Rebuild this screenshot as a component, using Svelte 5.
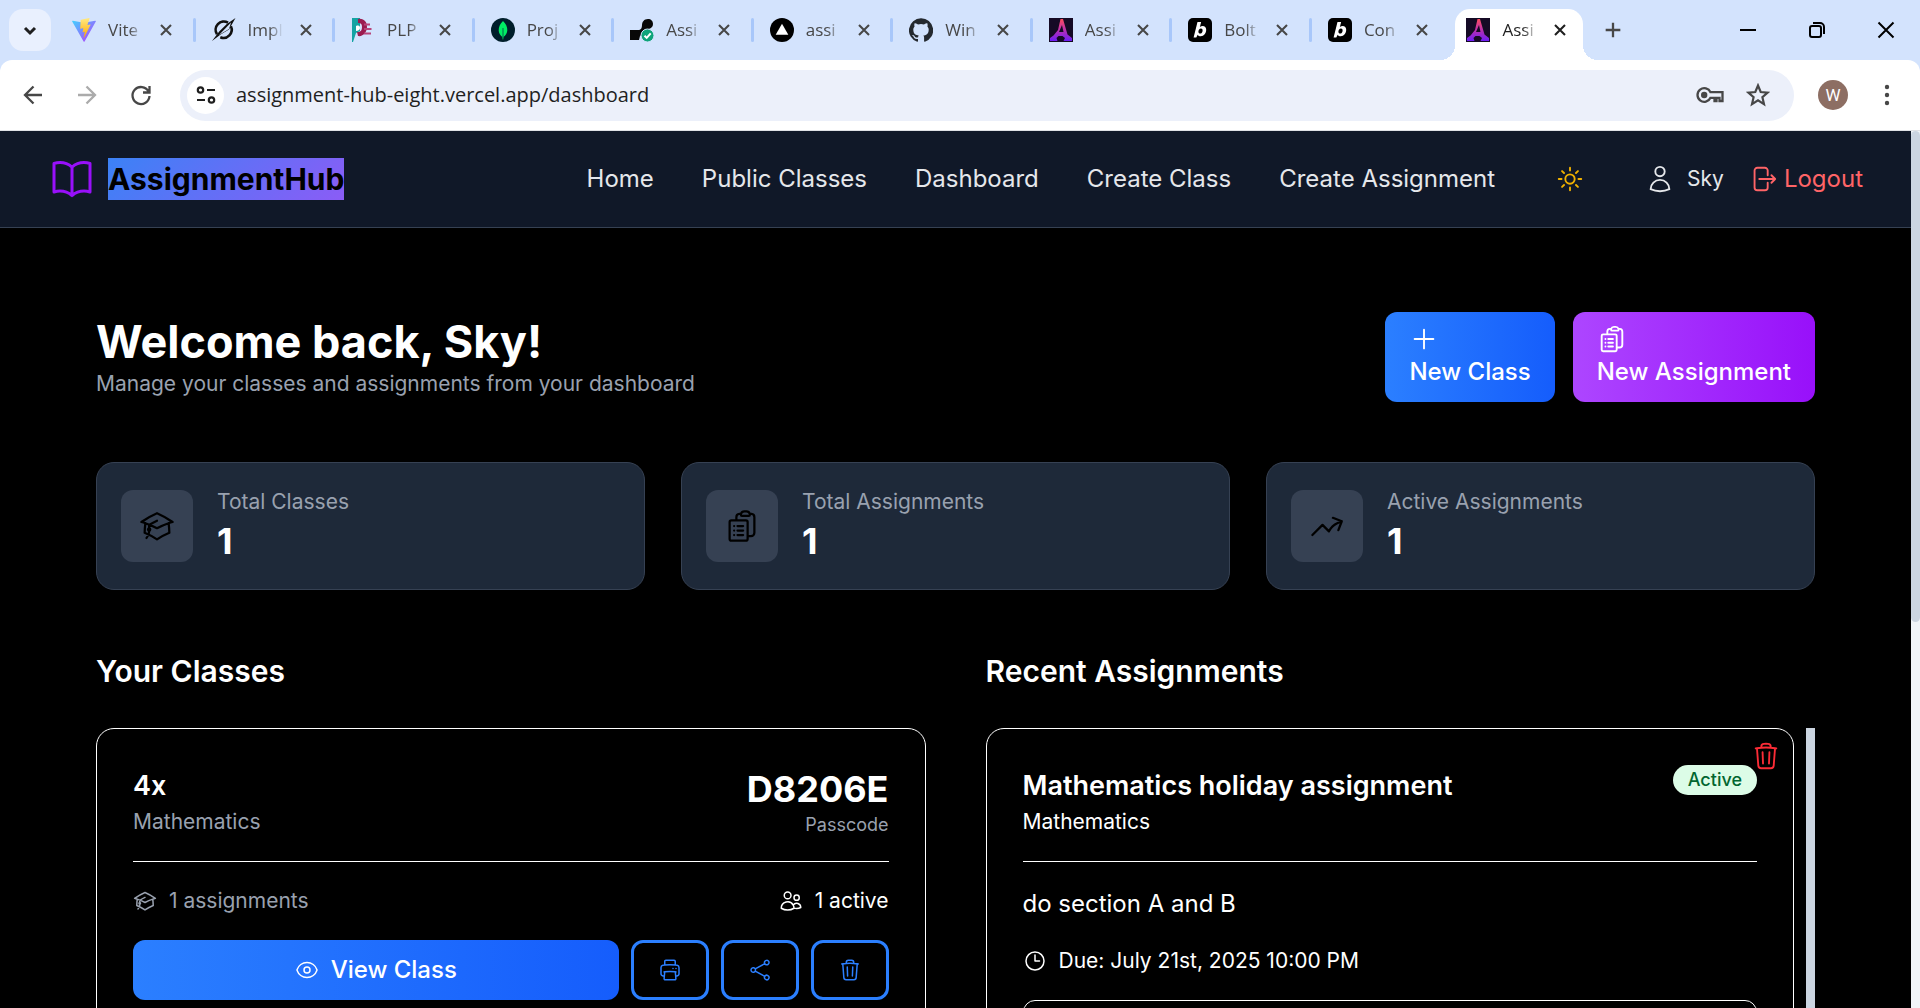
<script>
  const tabs = [
    { icon: 'vite', title: 'Vite' },
    { icon: 'slash', title: 'Impl' },
    { icon: 'plp', title: 'PLP' },
    { icon: 'leaf', title: 'Proj' },
    { icon: 'check', title: 'Assi' },
    { icon: 'triangle', title: 'assi' },
    { icon: 'github', title: 'Win' },
    { icon: 'hub', title: 'Assi' },
    { icon: 'bolt', title: 'Bolt' },
    { icon: 'bolt', title: 'Con' },
    { icon: 'hub', title: 'Assi', active: true }
  ];

  const links = ['Home', 'Public Classes', 'Dashboard', 'Create Class', 'Create Assignment'];

  const icons = {
    book: 'M12 6.042A8.967 8.967 0 0 0 6 3.75c-1.052 0-2.062.18-3 .512v14.25A8.987 8.987 0 0 1 6 18c2.305 0 4.408.867 6 2.292m0-14.25a8.966 8.966 0 0 1 6-2.292c1.052 0 2.062.18 3 .512v14.25A8.987 8.987 0 0 0 18 18a8.967 8.967 0 0 0-6 2.292m0-14.25v14.25',
    sun: 'M12 3v2.25m6.364.386-1.591 1.591M21 12h-2.25m-.386 6.364-1.591-1.591M12 18.75V21m-4.773-4.227-1.591 1.591M5.25 12H3m4.227-4.773L5.636 5.636M15.75 12a3.75 3.75 0 1 1-7.5 0 3.75 3.75 0 0 1 7.5 0Z',
    user: 'M15.75 6a3.75 3.75 0 1 1-7.5 0 3.75 3.75 0 0 1 7.5 0ZM4.501 20.118a7.5 7.5 0 0 1 14.998 0A17.933 17.933 0 0 1 12 21.75c-2.676 0-5.216-.584-7.499-1.632Z',
    logout: 'M15.75 9V5.25A2.25 2.25 0 0 0 13.5 3h-6a2.25 2.25 0 0 0-2.25 2.25v13.5A2.25 2.25 0 0 0 7.5 21h6a2.25 2.25 0 0 0 2.25-2.25V15m3 0 3-3m0 0-3-3m3 3H9',
    plus: 'M12 4.5v15m7.5-7.5h-15',
    clipboard: 'M9 12h3.75M9 15h3.75M9 18h3.75m3 .75H18a2.25 2.25 0 0 0 2.25-2.25V6.108c0-1.135-.845-2.098-1.976-2.192a48.424 48.424 0 0 0-1.123-.08m-5.801 0c-.065.21-.1.433-.1.664 0 .414.336.75.75.75h4.5a.75.75 0 0 0 .75-.75 2.25 2.25 0 0 0-.1-.664m-5.8 0A2.251 2.251 0 0 1 13.5 2.25H15c1.012 0 1.867.668 2.15 1.586m-5.8 0c-.376.023-.75.05-1.124.08C9.095 4.01 8.25 4.973 8.25 6.108V8.25m0 0H4.875c-.621 0-1.125.504-1.125 1.125v11.25c0 .621.504 1.125 1.125 1.125h9.75c.621 0 1.125-.504 1.125-1.125V9.375c0-.621-.504-1.125-1.125-1.125H8.25ZM6.75 12h.008v.008H6.75V12Zm0 3h.008v.008H6.75V15Zm0 3h.008v.008H6.75V18Z',
    cap: 'M4.26 10.147a60.438 60.438 0 0 0-.491 6.347A48.62 48.62 0 0 1 12 20.904a48.62 48.62 0 0 1 8.232-4.41 60.46 60.46 0 0 0-.491-6.347m-15.482 0a50.636 50.636 0 0 0-2.658-.813A59.906 59.906 0 0 1 12 3.493a59.903 59.903 0 0 1 10.399 5.84c-.896.248-1.783.52-2.658.814m-15.482 0A50.717 50.717 0 0 1 12 13.489a50.702 50.702 0 0 1 7.74-3.342M6.75 15a.75.75 0 1 0 0-1.5.75.75 0 0 0 0 1.5Zm0 0v-3.675A55.378 55.378 0 0 1 12 8.443m-7.007 11.55A5.981 5.981 0 0 0 6.75 15.75v-1.5',
    trend: 'M2.25 18 9 11.25l4.306 4.306a11.95 11.95 0 0 1 5.814-5.518l2.74-1.22m0 0-5.94-2.281m5.94 2.28-2.28 5.941',
    printer: 'M6.72 13.829c-.24.03-.48.062-.72.096m.72-.096a42.415 42.415 0 0 1 10.56 0m-10.56 0L6.34 18m10.94-4.171c.24.03.48.062.72.096m-.72-.096L17.66 18m0 0 .229 2.523a1.125 1.125 0 0 1-1.12 1.227H7.231c-.662 0-1.18-.568-1.12-1.227L6.34 18m11.318 0h1.091A2.25 2.25 0 0 0 21 15.75V9.456c0-1.081-.768-2.015-1.837-2.175a48.055 48.055 0 0 0-1.913-.247M6.34 18H5.25A2.25 2.25 0 0 1 3 15.75V9.456c0-1.081.768-2.015 1.837-2.175a48.041 48.041 0 0 1 1.913-.247m10.5 0a48.536 48.536 0 0 0-10.5 0m10.5 0V3.375c0-.621-.504-1.125-1.125-1.125h-8.25c-.621 0-1.125.504-1.125 1.125v3.659M18 10.5h.008v.008H18V10.5Zm-3 0h.008v.008H15V10.5Z',
    share: 'M7.217 10.907a2.25 2.25 0 1 0 0 2.186m0-2.186c.18.324.283.696.283 1.093s-.103.77-.283 1.093m0-2.186 9.566-5.314m-9.566 7.5 9.566 5.314m0 0a2.25 2.25 0 1 0 3.935 2.186 2.25 2.25 0 0 0-3.935-2.186Zm0-12.814a2.25 2.25 0 1 0 3.933-2.185 2.25 2.25 0 0 0-3.933 2.185Z',
    trash: 'm14.74 9-.346 9m-4.788 0L9.26 9m9.968-3.21c.342.052.682.107 1.022.166m-1.022-.165L18.16 19.673a2.25 2.25 0 0 1-2.244 2.077H8.084a2.25 2.25 0 0 1-2.244-2.077L4.772 5.79m14.456 0a48.108 48.108 0 0 0-3.478-.397m-12 .562c.34-.059.68-.114 1.022-.165m0 0a48.11 48.11 0 0 1 3.478-.397m7.5 0v-.916c0-1.18-.91-2.164-2.09-2.201a51.964 51.964 0 0 0-3.32 0c-1.18.037-2.09 1.022-2.09 2.201v.916m7.5 0a48.667 48.667 0 0 0-7.5 0',
    eye: 'M2.036 12.322a1.012 1.012 0 0 1 0-.639C3.423 7.51 7.36 4.5 12 4.5c4.638 0 8.573 3.007 9.963 7.178.07.207.07.431 0 .639C20.577 16.49 16.64 19.5 12 19.5c-4.638 0-8.573-3.007-9.963-7.178ZM15 12a3 3 0 1 1-6 0 3 3 0 0 1 6 0Z',
    users: 'M15 19.128a9.38 9.38 0 0 0 2.625.372 9.337 9.337 0 0 0 4.121-.952 4.125 4.125 0 0 0-7.533-2.493M15 19.128v-.003c0-1.113-.285-2.16-.786-3.07M15 19.128v.106A12.318 12.318 0 0 1 8.624 21c-2.331 0-4.512-.645-6.374-1.766l-.001-.109a6.375 6.375 0 0 1 11.964-3.07M12 6.375a3.375 3.375 0 1 1-6.75 0 3.375 3.375 0 0 1 6.75 0Zm8.25 2.25a2.625 2.625 0 1 1-5.25 0 2.625 2.625 0 0 1 5.25 0Z',
    clock: 'M12 6v6h4.5m4.5 0a9 9 0 1 1-18 0 9 9 0 0 1 18 0Z'
  };

  const stats = [
    { icon: 'cap', label: 'Total Classes', value: 1 },
    { icon: 'clipboard', label: 'Total Assignments', value: 1 },
    { icon: 'trend', label: 'Active Assignments', value: 1 }
  ];
</script>

{#snippet icon(name, size = 'md')}
  <svg class="icon {size}" viewBox="0 0 24 24" aria-hidden="true"><path d={icons[name]} /></svg>
{/snippet}

{#snippet favicon(name)}
  <svg class="favicon" viewBox="0 0 24 24" aria-hidden="true">
    {#if name === 'vite'}
      <defs>
        <linearGradient id="va" x1="0" y1="0" x2="1" y2="1"><stop offset="0" stop-color="#41d1ff" /><stop offset="1" stop-color="#bd34fe" /></linearGradient>
        <linearGradient id="vb" x1="0" y1="0" x2="0" y2="1"><stop offset="0" stop-color="#ffea83" /><stop offset="1" stop-color="#ffa800" /></linearGradient>
      </defs>
      <path fill="url(#va)" d="M23.8 3.6 12.6 23.5c-.2.4-.8.4-1 0L.2 3.6c-.3-.5.1-1 .6-.9L12 4.7l11.200-2c.5-.1.900.4.6.9z" />
      <path fill="url(#vb)" d="M17.200.1 9 1.700c-.2 0-.3.100-.3.300L8.200 10.400c0 .2.200.400.400.300l2.300-.5c.200 0 .400.100.400.400l-.7 3.300c0 .2.200.400.400.300l1.400-.4c.2-.1.500.1.400.400l-1.100 5.200c-.1.300.400.500.500.200l6.300-12.700c.1-.2-.1-.4-.3-.4l-2.400.5c-.2 0-.4-.2-.3-.4L17.600.5c0-.2-.200-.5-.4-.4z" />
    {:else if name === 'slash'}
      <path fill="none" stroke="#111" stroke-width="2.600" d="M18.900 8.300A8.200 8.200 0 0 1 8.300 19.300M5 16.300A8.200 8.200 0 0 1 16 4.700" />
      <path fill="#111" d="M23.500 0 17 11.500 9 16.200 0 23l7.200-9.500L14.800 6z" />
      <path fill="#d3e3fd" d="m19 4.500-12 12.600L17 11z" />
    {:else if name === 'plp'}
      <path fill="#14a3a3" d="M1 0h8v13l-4 2-3 9H1z" />
      <path fill="#9b1c50" d="M7 1c6-1 9 3 9 8s-4 10-9 9l-1-4c4 0 5-2 5-5s-1-4-4-4z" />
      <path fill="#fff" d="M5 8c3-1 4 0 4 2s-2 3-4 3z" />
      <path stroke="#b8447a" stroke-width="2" d="M13 6.500h6M13 11h7.500M13 15.500h7" />
    {:else if name === 'leaf'}
      <circle cx="12" cy="12" r="12" fill="#001e2b" />
      <path fill="#00ed64" d="M12 3c3 3 4.500 6 4.300 9.500-.2 3-1.800 5-3.800 6.500l-.3 2.500h-.5l-.3-2.500c-2-1.500-3.600-3.500-3.700-6.500C7.600 9 9 6 12 3z" />
      <path stroke="#00684a" stroke-width="1" d="M12 10v9" />
    {:else if name === 'check'}
      <path fill="#080808" d="M0 12h8c3 0 4-2 4-5 0-3 2-6 6-6 3 0 5 2 5 5s-2 4-4 5l-9 7-1 4H0z" />
      <circle cx="17.500" cy="17.500" r="6.500" fill="#0ea47a" stroke="#d3e3fd" />
      <path fill="none" stroke="#fff" stroke-width="2" d="m14.500 17.700 2.200 2.200 4-4.600" />
    {:else if name === 'triangle'}
      <circle cx="12" cy="12" r="12" fill="#000" />
      <path fill="#fff" d="m12 5.800 6.300 11H5.700z" />
    {:else if name === 'github'}
      <path fill="#24292f" d="M12 .3a12 12 0 0 0-3.800 23.400c.6.1.8-.3.8-.6v-2.200c-3.300.7-4-1.400-4-1.400-.6-1.400-1.400-1.800-1.400-1.800-1-.7.1-.7.1-.7 1.200 0 1.900 1.200 1.900 1.200 1 1.800 2.800 1.300 3.500 1 0-.8.400-1.300.7-1.600-2.700-.3-5.500-1.300-5.500-6 0-1.200.5-2.300 1.300-3.100-.2-.4-.6-1.600 0-3.200 0 0 1-.3 3.400 1.200a11.500 11.500 0 0 1 6 0c2.300-1.500 3.300-1.200 3.300-1.200.6 1.600.2 2.800.1 3.200.8.8 1.300 1.900 1.300 3.200 0 4.600-2.800 5.600-5.500 5.900.5.400.9 1 .9 2.200v3.300c0 .3.1.7.8.6A12 12 0 0 0 12 .3" />
    {:else if name === 'hub'}
      <defs><linearGradient id="ha" x1="0" y1="0" x2="0" y2="1"><stop offset="0" stop-color="#ff4d5d" /><stop offset=".5" stop-color="#b92fb0" /><stop offset="1" stop-color="#6d1df5" /></linearGradient></defs>
      <path fill="#150a25" d="M0 0h24v24H0z" />
      <path fill="url(#ha)" fill-rule="evenodd" d="M11.500 1h2.500l4.500 15.500 4.500 3.500v3h-8.500l1.500-3-2.500-2H9.500L7.500 20l1 3H1v-3l3.500-2.500L9 12zM13 7l-3 7h4.500z" />
    {:else if name === 'bolt'}
      <rect width="24" height="24" rx="5" fill="#000" />
      <path fill="#fff" fill-rule="evenodd" d="M9.500 4h3.600l-1.200 5c.8-.8 1.700-1.100 2.700-1.100 2.200 0 3.600 1.500 3.600 3.900 0 3.500-2.300 6.500-5.400 6.500-1.400 0-2.500-.6-3.100-1.600l-1.400 2.800H5.600zM13 10.500c-1.500 0-2.600 1.500-2.600 3.200 0 1.100.7 1.900 1.700 1.900 1.400 0 2.500-1.500 2.500-3.200 0-1.200-.6-1.900-1.600-1.900z" />
    {/if}
  </svg>
{/snippet}

<div class="window">
  <div class="tabbar">
    <button class="tab-search" aria-label="Search tabs">
      <svg class="glyph s24" viewBox="0 0 24 24"><path d="m7 10 5 5 5-5" stroke-width="3" /></svg>
    </button>
    <div class="tabs">
      {#each tabs as tab}
        <div class="tab" class:active={tab.active}>
          {@render favicon(tab.icon)}
          <span class="tab-title">{tab.title}</span>
          <button class="close" aria-label="Close tab">
            <svg class="glyph s24" viewBox="0 0 24 24"><path d="m6 6 12 12M18 6 6 18" stroke-width="2.500" /></svg>
          </button>
        </div>
      {/each}
    </div>
    <button class="new-tab" aria-label="New tab">
      <svg class="glyph s24" viewBox="0 0 24 24"><path d="M12 4v16M4 12h16" stroke-width="2.500" /></svg>
    </button>
    <div class="window-controls">
      <button aria-label="Minimize"><svg class="glyph s24" viewBox="0 0 24 24"><path d="M4 12h16" stroke-width="2" /></svg></button>
      <button aria-label="Restore"><svg class="glyph s24" viewBox="0 0 24 24"><rect x="5" y="8" width="11" height="11" rx="2" stroke-width="2" /><path d="M8 5h7a4 4 0 0 1 4 4v7" stroke-width="2" /></svg></button>
      <button aria-label="Close window"><svg class="glyph s24" viewBox="0 0 24 24"><path d="m4.500 4.500 15 15m0-15-15 15" stroke-width="2" /></svg></button>
    </div>
  </div>

  <div class="toolbar-wrap">
    <div class="toolbar">
      <button class="tool" aria-label="Back"><svg class="glyph s24" viewBox="0 0 24 24"><path d="M21 12H4m8.500-8.500L4 12l8.500 8.500" stroke-width="2.300" /></svg></button>
      <button class="tool muted" aria-label="Forward"><svg class="glyph s24" viewBox="0 0 24 24"><path d="M3 12h17m-8.500-8.500L20 12l-8.500 8.500" stroke-width="2.300" /></svg></button>
      <button class="tool" aria-label="Reload"><svg class="glyph s24" viewBox="0 0 24 24"><path d="M19.500 8.500A8.500 8.500 0 1 0 20.500 13M20.500 3v6.500H14" stroke-width="2.300" /></svg></button>
      <div class="address">
        <button class="site-info" aria-label="Site information">
          <svg class="glyph s24" viewBox="0 0 24 24"><circle cx="6.500" cy="7" r="2.700" stroke-width="2.200" /><path d="M13 7h8M3 17h8" stroke-width="2.200" /><circle cx="17.500" cy="17" r="2.700" stroke-width="2.200" /></svg>
        </button>
        <input class="url" type="text" aria-label="Address" value="assignment-hub-eight.vercel.app/dashboard" />
        <button class="tool-sm" aria-label="Passwords">
          <svg class="key" viewBox="0 0 28 20"><path d="M14.500 7.200H26.500V16H23.500V12.800H20.500V16H18.500V12.800H14.500A6.800 6.800 0 1 1 14.500 7.200Z" /><circle cx="8.200" cy="10" r="3.200" /></svg>
        </button>
        <button class="tool-sm" aria-label="Bookmark">
          <svg class="glyph s24" viewBox="0 0 24 24"><path d="m12 2.500 2.700 6.500 7 .6-5.300 4.600 1.600 6.900-6-3.700-6 3.700 1.600-6.900L2.300 9.600l7-.6z" stroke-width="2.200" /></svg>
        </button>
      </div>
      <button class="avatar" aria-label="Profile">W</button>
      <button class="tool menu" aria-label="Menu"><svg class="dots" viewBox="0 0 24 24"><circle cx="12" cy="4" r="2.200" /><circle cx="12" cy="12" r="2.200" /><circle cx="12" cy="20" r="2.200" /></svg></button>
    </div>
  </div>

  <div class="viewport">
    <div class="page">
      <header class="site-header">
        <a class="brand" href="#home">
          {@render icon('book', 'xl')}
          <span class="brand-name">AssignmentHub</span>
        </a>
        <nav>
          {#each links as link}
            <a href="#{link}">{link}</a>
          {/each}
          <button class="theme" aria-label="Toggle theme">{@render icon('sun')}</button>
          <div class="account">
            <a class="profile" href="#profile">{@render icon('user')}Sky</a>
            <button class="logout">{@render icon('logout')}Logout</button>
          </div>
        </nav>
      </header>

      <main>
        <section class="welcome">
          <div>
            <h1>Welcome back, Sky!</h1>
            <p>Manage your classes and assignments from your dashboard</p>
          </div>
          <div class="actions">
            <button class="action blue">{@render icon('plus')}New Class</button>
            <button class="action purple">{@render icon('clipboard')}New Assignment</button>
          </div>
        </section>

        <section class="stats">
          {#each stats as stat}
            <div class="stat">
              <div class="stat-icon">{@render icon(stat.icon, 'lg')}</div>
              <div>
                <p class="stat-label">{stat.label}</p>
                <p class="stat-value">{stat.value}</p>
              </div>
            </div>
          {/each}
        </section>

        <div class="columns">
          <section>
            <h2>Your Classes</h2>
            <article class="card">
              <div class="card-head">
                <div>
                  <h3>4x</h3>
                  <p class="subject dim">Mathematics</p>
                </div>
                <div class="passcode">
                  <p class="code">D8206E</p>
                  <p class="code-label">Passcode</p>
                </div>
              </div>
              <div class="meta">
                <span class="meta-item dim">{@render icon('cap', 'sm')}1 assignments</span>
                <span class="meta-item">{@render icon('users', 'sm')}1 active</span>
              </div>
              <div class="card-actions">
                <button class="view">{@render icon('eye', 'sm')}View Class</button>
                <button class="outline" aria-label="Print">{@render icon('printer', 'sm')}</button>
                <button class="outline" aria-label="Share">{@render icon('share', 'sm')}</button>
                <button class="outline" aria-label="Delete class">{@render icon('trash', 'sm')}</button>
              </div>
            </article>
          </section>

          <section>
            <h2>Recent Assignments</h2>
            <div class="scroller">
              <article class="card">
                <button class="remove" aria-label="Delete assignment">{@render icon('trash')}</button>
                <div class="card-head">
                  <div>
                    <h3>Mathematics holiday assignment</h3>
                    <p class="subject">Mathematics</p>
                  </div>
                  <span class="badge">Active</span>
                </div>
                <p class="description">do section A and B</p>
                <p class="due">{@render icon('clock', 'sm')}Due: July 21st, 2025 10:00 PM</p>
                <div class="panel"></div>
              </article>
              <div class="list-scrollbar"></div>
            </div>
          </section>
        </div>
      </main>
    </div>
    <div class="page-scrollbar"><div class="thumb"></div></div>
  </div>
</div>

<style>
  :global(body) { margin: 0; }
  .window, .window * { box-sizing: border-box; }
  .window {
    height: 100vh;
    display: flex;
    flex-direction: column;
    overflow: hidden;
    font-family: Inter, sans-serif;
    background: #000;
  }
  button { font: inherit; color: inherit; background: none; border: 0; padding: 0; margin: 0; }
  a { color: inherit; text-decoration: none; }
  h1, h2, h3, p { margin: 0; }

  .glyph { display: block; fill: none; stroke: currentColor; }
  .s24 { width: 24px; height: 24px; }
  .icon {
    display: block;
    flex: none;
    fill: none;
    stroke: currentColor;
    stroke-width: 1.5;
    stroke-linecap: round;
    stroke-linejoin: round;
  }
  .sm { width: 24px; height: 24px; }
  .md { width: 30px; height: 30px; }
  .lg { width: 36px; height: 36px; }
  .xl { width: 48px; height: 48px; }

  /* Browser chrome */
  .tabbar {
    flex: none;
    display: flex;
    align-items: center;
    height: 60px;
    padding-left: 9px;
    background: #d3e3fd;
    color: #1f1f1f;
    font-family: "Open Sans", sans-serif;
  }
  .tab-search {
    flex: none;
    display: grid;
    place-items: center;
    width: 42px;
    height: 42px;
    border-radius: 14px;
    background: #e9f0fe;
  }
  .tabs {
    display: grid;
    grid-template-columns: repeat(11, minmax(0, 1fr));
    flex: 0 1 1540px;
    min-width: 0;
    height: 60px;
    padding: 9px 0 0 5px;
  }
  .tab {
    position: relative;
    display: flex;
    align-items: center;
    padding: 0 0 9px 16px;
    color: #474747;
  }
  .tab:not(.active)::after {
    content: "";
    position: absolute;
    right: 0;
    top: 9px;
    width: 3px;
    height: 24px;
    border-radius: 2px;
    background: #a8c7fa;
  }
  .tab:nth-last-child(2)::after { display: none; }
  .tab.active {
    margin: 0 8px 0 4px;
    padding-left: 11px;
    border-radius: 15px 15px 0 0;
    background: #fff;
    color: #1f1f1f;
  }
  .tab.active::before, .tab.active::after {
    content: "";
    position: absolute;
    bottom: 0;
    width: 15px;
    height: 15px;
  }
  .tab.active::before { left: -15px; background: radial-gradient(circle at 0 0, transparent 15px, #fff 15px); }
  .tab.active::after { right: -15px; background: radial-gradient(circle at 100% 0, transparent 15px, #fff 15px); }
  .favicon { flex: none; width: 24px; height: 24px; }
  .tab-title {
    flex: none;
    width: 35px;
    margin-left: 12px;
    white-space: nowrap;
    font-size: 17px;
    line-height: 24px;
    mask-image: linear-gradient(to right, #000 60%, transparent);
  }
  .close { margin-left: 11px; }
  .close .glyph { width: 20px; height: 20px; margin: 2px; }
  .new-tab { margin-left: 11px; color: #474747; }
  .new-tab .glyph { width: 22px; height: 22px; }
  .window-controls { display: flex; margin-left: auto; color: #000; }
  .window-controls button { display: grid; place-items: center; width: 69px; height: 60px; }

  .toolbar-wrap { flex: none; background: #d3e3fd; }
  .toolbar {
    display: flex;
    align-items: center;
    height: 71px;
    padding: 0 6px;
    border-bottom: 1px solid #dfe1e5;
    border-radius: 12px 12px 0 0;
    background: #fff;
    color: #474747;
  }
  .tool { flex: none; display: grid; place-items: center; width: 54px; height: 48px; }
  .muted { color: #ababab; }
  .address {
    flex: 1;
    display: flex;
    align-items: center;
    gap: 12px;
    height: 51px;
    margin: 0 24px 0 12px;
    padding: 0 18px 0 7px;
    border-radius: 26px;
    background: #ecf0fa;
  }
  .site-info {
    flex: none;
    display: grid;
    place-items: center;
    width: 37px;
    height: 37px;
    border-radius: 50%;
    background: #fff;
    color: #1f1f1f;
  }
  .url {
    flex: 1;
    min-width: 0;
    height: 36px;
    padding: 0 0 2px;
    border: 0;
    outline: 0;
    font-family: "Open Sans", sans-serif;
    font-size: 20px;
    color: #1f1f1f;
    background: none;
  }
  .tool-sm { flex: none; display: grid; place-items: center; width: 36px; height: 36px; }
  .key { width: 28px; height: 20px; fill: none; stroke: currentColor; stroke-width: 2.3; }
  .key circle { fill: currentColor; stroke: none; }
  .avatar {
    flex: none;
    width: 30px;
    height: 30px;
    border-radius: 50%;
    background: #8d6e63;
    color: #fff;
    font-family: Roboto, sans-serif;
    font-size: 17px;
    line-height: 30px;
    text-align: center;
  }
  .menu { margin-left: 12px; }
  .dots { width: 24px; height: 24px; fill: currentColor; }

  /* Page */
  .viewport { flex: 1; min-height: 0; display: flex; overflow: hidden; }
  .page { flex: 1; min-width: 0; background: #000; color: #fff; }
  .page-scrollbar { flex: none; width: 9px; background: #f1f5f9; }
  .thumb { height: 56%; border-radius: 5px; background: #cbd5e1; }

  .site-header {
    display: flex;
    align-items: center;
    justify-content: space-between;
    height: 97px;
    padding: 0 48px;
    border-bottom: 1px solid #364153;
    background: #101828;
    color: #e5e7eb;
  }
  .brand { display: flex; align-items: center; gap: 12px; color: #9810fa; }
  .brand-name {
    background: linear-gradient(135deg, #3b82f6, #8b5cf6);
    color: #000;
    font-size: 30px;
    font-weight: 700;
    line-height: 42px;
  }
  nav { display: flex; align-items: center; gap: 48px; font-size: 24px; line-height: 36px; white-space: nowrap; }
  .theme { padding: 12px; color: #f0b100; }
  .account { display: flex; align-items: center; gap: 24px; }
  .profile { display: flex; align-items: center; gap: 12px; font-size: 21px; line-height: 30px; }
  .logout { display: flex; align-items: center; gap: 6px; color: #ff6467; }

  main { padding: 84px 96px 0; }
  .welcome { display: flex; align-items: center; justify-content: space-between; }
  h1 { font-size: 45px; font-weight: 700; line-height: 54px; }
  .welcome p { font-size: 21px; line-height: 30px; color: #99a1af; }
  .actions { display: flex; gap: 18px; }
  .action {
    padding: 12px 24px;
    border-radius: 12px;
    font-size: 24px;
    font-weight: 500;
    line-height: 36px;
    text-align: left;
    color: #fff;
  }
  .blue, .view { background: linear-gradient(to right, #2b7fff, #155dfc); }
  .purple { background: linear-gradient(to right, #ad46ff, #9810fa); }

  .stats { display: grid; grid-template-columns: repeat(3, 1fr); gap: 36px; margin-top: 60px; }
  .stat {
    display: flex;
    align-items: center;
    gap: 24px;
    padding: 24px;
    border: 1px solid #364153;
    border-radius: 18px;
    background: #1e2939;
  }
  .stat-icon {
    display: grid;
    place-items: center;
    width: 72px;
    height: 72px;
    border-radius: 12px;
    background: #364153;
    color: #000;
  }
  .stat-label { font-size: 21px; line-height: 30px; color: #99a1af; }
  .stat-value { font-size: 36px; font-weight: 700; line-height: 48px; }

  .columns { display: grid; grid-template-columns: 1fr 1fr; gap: 60px; margin-top: 60px; }
  h2 { margin-bottom: 36px; font-size: 30px; font-weight: 600; line-height: 42px; }
  .card { position: relative; padding: 36px; border: 1px solid #fff; border-radius: 18px; }
  .card-head {
    display: flex;
    justify-content: space-between;
    align-items: flex-start;
    margin-bottom: 24px;
    padding-bottom: 24px;
    border-bottom: 1px solid #fff;
  }
  h3 { font-size: 27px; font-weight: 600; line-height: 42px; }
  .subject { font-size: 21px; line-height: 30px; }
  .dim { color: #99a1af; }
  .passcode { text-align: right; }
  .code { font-size: 36px; font-weight: 700; line-height: 48px; }
  .code-label { font-size: 18px; line-height: 24px; color: #99a1af; }
  .meta { display: flex; justify-content: space-between; margin-bottom: 24px; font-size: 21px; line-height: 30px; }
  .meta-item { display: flex; align-items: center; gap: 12px; }
  .card-actions { display: flex; gap: 12px; }
  .view {
    flex: 1;
    display: flex;
    align-items: center;
    justify-content: center;
    gap: 12px;
    padding: 12px 24px;
    border-radius: 12px;
    font-size: 24px;
    font-weight: 500;
    line-height: 36px;
  }
  .outline {
    display: grid;
    place-items: center;
    width: 78px;
    border: 3px solid #2b7fff;
    border-radius: 12px;
    color: #2b7fff;
  }

  .scroller { display: flex; gap: 12px; }
  .scroller .card { flex: 1; }
  .list-scrollbar { width: 9px; background: #cbd5e1; }
  .remove { position: absolute; top: 12px; right: 12px; z-index: 1; color: #fb2c36; }
  .badge {
    padding: 3px 15px;
    border-radius: 15px;
    background: #dcfce7;
    color: #016630;
    font-size: 18px;
    font-weight: 500;
    line-height: 24px;
  }
  .description { margin-bottom: 24px; font-size: 24px; line-height: 36px; }
  .due { display: flex; align-items: center; gap: 12px; margin-bottom: 24px; font-size: 21px; line-height: 30px; }
  .panel { height: 120px; border: 1px solid #fff; border-radius: 12px; }
</style>
